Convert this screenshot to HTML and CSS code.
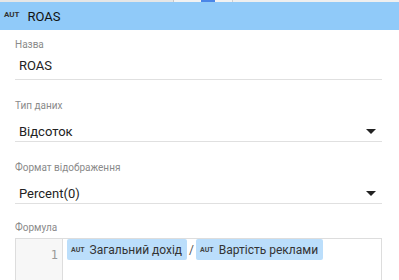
FILE: index.html
```html
<!DOCTYPE html>
<html lang="uk">
<head>
    <meta charset="UTF-8">
    <title>ROAS</title>
    <link rel="stylesheet" href="styles.css">
</head>
<body>
<div class="tabstrip">
    <span class="seg seg-a"></span>
    <span class="seg seg-b"></span>
    <span class="seg seg-blue"></span>
    <span class="seg seg-c"></span>
    <span class="seg seg-d"></span>
</div>
<div class="header">
    <span class="badge">AUT</span>
    <span class="title">ROAS</span>
</div>
<div class="form">
    <div class="field field-name">
        <label>Назва</label>
        <div class="value input">ROAS</div>
    </div>
    <div class="field">
        <label>Тип даних</label>
        <div class="value select">Відсоток <span class="arrow"></span></div>
    </div>
    <div class="field">
        <label>Формат відображення</label>
        <div class="value select">Percent(0) <span class="arrow"></span></div>
    </div>
    <div class="field field-formula">
        <label>Формула</label>
        <div class="editor">
            <div class="gutter"><span>1</span></div>
            <div class="code">
                <span class="chip"><span class="chip-badge">AUT</span>Загальний дохід</span>
                <span class="op">/</span>
                <span class="chip"><span class="chip-badge">AUT</span>Вартість реклами</span>
            </div>
        </div>
    </div>
</div>
</body>
</html>
```

FILE: styles.css
```css
body { margin: 0; font-family: Roboto, 'Liberation Sans', sans-serif; background: #fff; color: #222; overflow: hidden; }
.tabstrip { display: flex; height: 2px; background: #e9e9e9; }
.seg { display: block; height: 2px; }
.seg-a { width: 173px; background: #e6e6e6; border-right: 1px solid #c8c8c8; }
.seg-b { width: 27px; background: #f2f2f2; }
.seg-blue { width: 14px; background: #4a86e8; }
.seg-c { width: 17px; background: #f2f2f2; border-right: 1px solid #d0d0d0; }
.seg-d { flex: 1; background: #efefef; }

.header {
    display: flex;
    align-items: center;
    height: 28px;
    background: #90caf9;
    padding-left: 4px;
}
.badge { font-size: 8px; font-weight: bold; color: #333; margin-right: 8px; position: relative; top: -2px; }
.title { font-size: 13px; color: #111; }

.form { padding: 0 17px 0 15px; }
.field { margin-top: 20px; }
.field-name { margin-top: 9px; }
.field label {
    display: block;
    font-size: 10px;
    line-height: 12px;
    color: #8a8a8a;
}
.value {
    font-size: 13px;
    padding-left: 4px;
    border-bottom: 1px solid #e0e0e0;
    color: #222;
}
.input { height: 26px; line-height: 26px; padding-top: 2px; }
.select {
    display: flex;
    justify-content: space-between;
    align-items: center;
    height: 20px;
    padding-top: 9px;
}
.arrow {
    width: 0;
    height: 0;
    border-left: 5px solid transparent;
    border-right: 5px solid transparent;
    border-top: 5px solid #222;
    margin-right: 6px;
}
.field-formula { margin-top: 18px; }
.field-formula label { margin-bottom: 4px; }
.editor {
    display: flex;
    height: 41px;
    border: 1px solid #ddd;
    border-bottom: none;
}
.gutter {
    width: 46px;
    background: #f7f7f7;
    border-right: 1px solid #ddd;
    text-align: right;
    font-family: 'DejaVu Sans Mono', monospace;
    font-size: 12px;
    color: #999;
}
.gutter span { display: block; padding: 9px 4px 0 0; }
.code { display: flex; align-items: flex-start; padding-left: 4px; }
.chip {
    display: flex;
    align-items: center;
    height: 21px;
    background: #bbdefb;
    border-radius: 2px;
    padding: 0 5px 0 4px;
    font-size: 12px;
    color: #333;
}
.chip-badge { font-size: 7px; font-weight: bold; color: #444; margin-right: 5px; }
.op { font-size: 12px; color: #555; padding: 4px 2px 0; }
```
